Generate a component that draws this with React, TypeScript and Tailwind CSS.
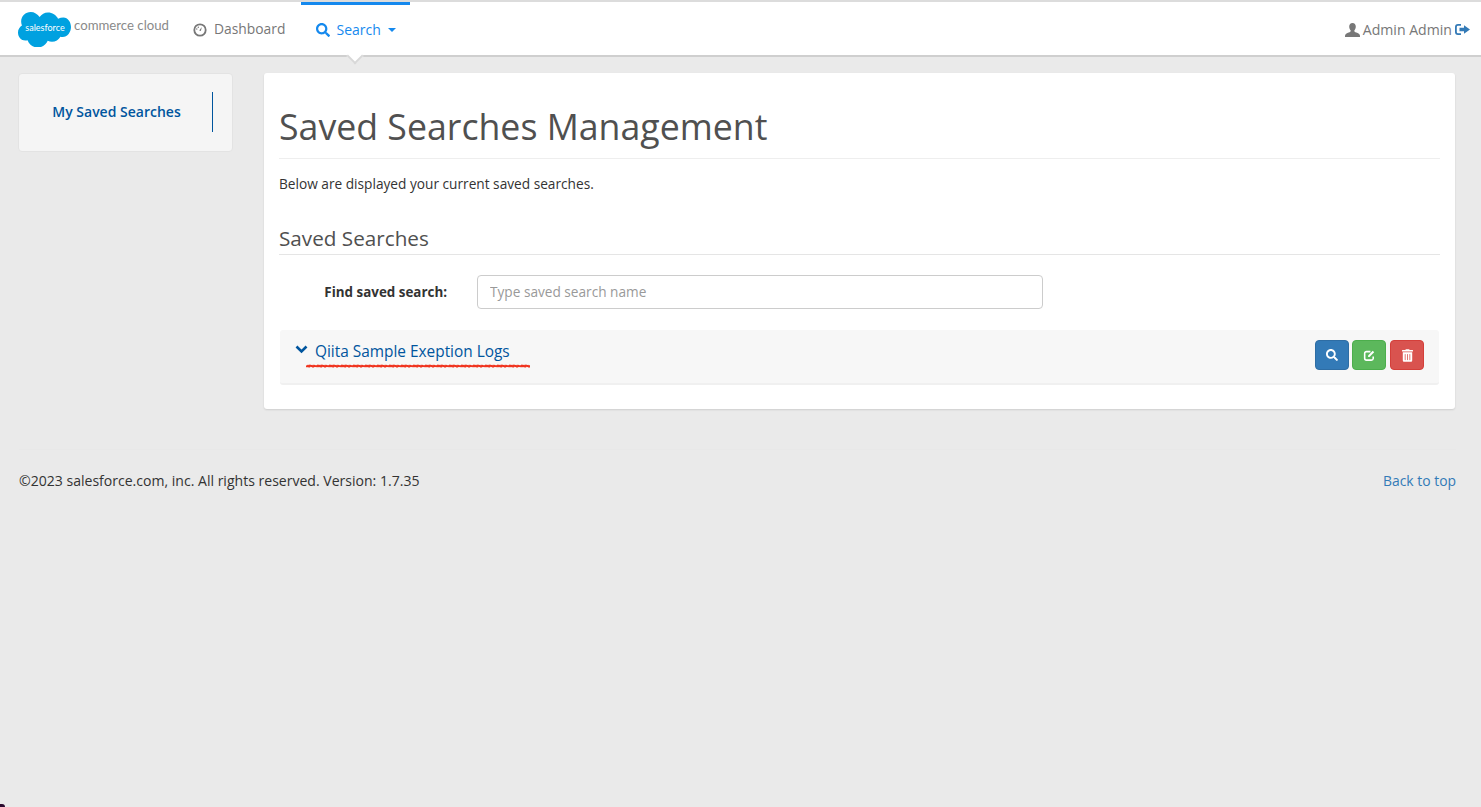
import { FaSearch, FaTrashAlt } from 'react-icons/fa';

const sans = "font-['Open_Sans','Liberation_Sans',sans-serif]";

function Logo() {
  return (
    <div className="relative flex items-center w-[151px] h-[36px]">
      <svg viewBox="0 0 54 36" preserveAspectRatio="none" className="w-[53px] h-[36px] shrink-0">
        <path
          fill="#00a1e0"
          d="M22 6c2-2.600 5-4.500 8.500-4.500 4.500 0 8.300 2.500 10.300 6.200 1.700-.8 3.600-1.200 5.500-1.200C50.800 6.500 54 11 54 16s-3.600 10-8.500 10c-.8 0-1.600-.1-2.300-.2-1.700 3-5 5-8.600 5-1.500 0-3-.4-4.300-1-1.700 4-5.600 6.700-10.200 6.700-4.800 0-8.800-3-10.400-7.200-.7.200-1.500.2-2.300.2C3.300 29.500 0 26 0 21.500c0-3 1.600-5.600 4-7-.5-1.200-.8-2.500-.8-3.900C3.200 5 7.700 1 13 1c3.600 0 6.900 2 9 5z"
        />
      </svg>
      <span className="absolute left-[6px] top-[11px] w-[42px] text-center text-[9px] leading-[12px] text-white font-['Lato',sans-serif]">salesforce</span>
      <span className="ml-[3px] -mt-[6px] text-[13.200px] text-[#8a8a8a] whitespace-nowrap font-['Lato',sans-serif]">commerce cloud</span>
    </div>
  );
}

function Squiggle() {
  // the hand drawn red line under the search name
  const steps = [1.5, 2.4, 1.7, 2.6, 1.4, 2.2, 1.8, 2.7, 1.6, 2.3, 2, 2.5];
  let d = 'M0 2';
  for (let x = 1; x <= 224; x += 1) d += ` L${x} ${steps[x % steps.length]}`;
  return (
    <svg viewBox="0 0 224 4" className="absolute left-[26px] top-[34px] w-[224px] h-[4px]">
      <path d={d} fill="none" stroke="#f0341f" strokeWidth="1.800" />
    </svg>
  );
}

function EditIcon() {
  return (
    <svg viewBox="0 0 14 14" className="w-[13px] h-[13px]" fill="none" stroke="currentColor" strokeWidth="1.700">
      <path d="M11 8v2.200A2 2 0 0 1 9 12H3.800a2 2 0 0 1-2-2V4.800a2 2 0 0 1 2-2H8" />
      <path d="M5.500 8.500V7l5-5 1.500 1.500-5 5z" fill="currentColor" stroke="none" />
    </svg>
  );
}

function DashIcon() {
  return (
    <svg viewBox="0 0 14 14" className="w-[14px] h-[14px]">
      <circle cx="7" cy="7" r="5.700" fill="none" stroke="currentColor" strokeWidth="1.800" />
      <path d="M6.200 7.400 8.800 3.900 7.900 8z" fill="currentColor" />
      <circle cx="3.800" cy="6" r=".7" fill="currentColor" />
      <circle cx="5.300" cy="4.200" r=".7" fill="currentColor" />
    </svg>
  );
}

function UserIcon() {
  return (
    <svg viewBox="0 0 15 14" className="w-[15px] h-[14px]" fill="currentColor">
      <path d="M7.500 0C9.600 0 10.800 1.500 10.800 3.600c0 1.700-.7 3.200-1.500 4 0 .8.300 1.300 1.200 1.700 2 .8 4.500 1.400 4.500 3.400V14H0v-1.300c0-2 2.500-2.600 4.500-3.400.9-.4 1.200-.9 1.200-1.700-.8-.8-1.500-2.300-1.500-4C4.200 1.500 5.400 0 7.500 0z" />
    </svg>
  );
}

function LogoutIcon() {
  return (
    <svg viewBox="0 0 15 13" className="w-[15px] h-[13px] text-[#337ab7]" fill="currentColor">
      <path d="M6 1H3a3 3 0 0 0-3 3v5a3 3 0 0 0 3 3h3v-1.800H3A1.200 1.200 0 0 1 1.800 9V4A1.200 1.200 0 0 1 3 2.800h3z" />
      <path d="M9 2.200 15 6.500 9 10.800V8.300H4.500V4.700H9z" />
    </svg>
  );
}

export default function App() {
  return (
    <div className={`relative min-h-[807px] bg-[#eaeaea] text-[#333] ${sans}`}>
      <div className="relative flex h-[57px] items-stretch justify-between border-t-2 border-b-2 border-t-[#dcdcdc] border-b-[#cfcfcf] bg-white pl-[18px] pr-[11px]">
        <div className="flex items-stretch">
          <div className="flex items-center">
            <Logo />
          </div>
          <a className="ml-[24px] flex items-center gap-[7px] pt-[2px] text-[13.850px] text-[#777]">
            <DashIcon />
            Dashboard
          </a>
          <a className="relative ml-[16px] flex w-[109px] items-center gap-[6px] border-t-[3px] border-[#1589ee] pb-[1px] pl-[15px] text-[14px] text-[#1589ee]">
            <FaSearch className="h-[14px] w-[14px]" />
            Search
            <span className="ml-[1px] h-0 w-0 border-x-[4px] border-t-[4px] border-x-transparent border-t-[#1589ee]" />
            <span className="absolute bottom-[-7px] left-[47.500px] h-[12px] w-[12px] rotate-45 border-r-2 border-b-2 border-[#d8d8d8] bg-white" />
          </a>
        </div>
        <div className="flex items-center gap-[3px] pt-[2px] text-[14.100px] text-[#777]">
          <UserIcon />
          Admin Admin
          <LogoutIcon />
        </div>
      </div>

      <div className="flex items-start gap-[31px] pl-[18px] pr-[26px] pt-[16px]">
        <div className="flex h-[79px] w-[215px] shrink-0 items-center rounded-[4px] border border-[#e3e3e3] bg-[#f5f5f5] pb-[2px] pr-[19px]">
          <div className="flex h-[40px] w-full items-center justify-center border-r border-[#00559e] pl-[2px] text-[14px] font-semibold text-[#00559e]">
            My Saved Searches
          </div>
        </div>

        <div className="flex-1 rounded-[3px] bg-white pb-[24px] pl-[15px] pr-[15px] pt-[28px] shadow-[0_1px_2px_rgba(0,0,0,0.12)]">
          <h1 className="border-b border-[#eeeeee] pb-[7px] text-[35.700px] leading-[50px] text-[#505050]">Saved Searches Management</h1>
          <p className="mt-[15px] text-[13.680px] leading-[19px]">Below are displayed your current saved searches.</p>
          <h2 className="mt-[30px] border-b border-[#e5e5e5] pb-[1px] text-[20.700px] leading-[30px] text-[#505050]">Saved Searches</h2>

          <div className="mt-[20px] flex items-center">
            <label className="w-[168px] text-right text-[13.400px] font-bold">Find saved search:</label>
            <input
              placeholder="Type saved search name"
              className="ml-[30px] h-[34px] w-[566px] rounded-[4px] border border-[#cccccc] px-[12px] pb-[2px] text-[13.650px] placeholder:text-[#999]"
            />
          </div>

          <div className="relative mx-[1px] mt-[21px] flex h-[55px] items-start justify-between rounded-[3px] border-b-2 border-[#f0f0f0] bg-[#f7f7f7] pl-[15px] pr-[15px]">
            <div className="flex items-center gap-[7px] pt-[11px] text-[15.400px] leading-[22px] text-[#00559e]">
              <svg viewBox="0 0 13 9" className="mt-[-6px] h-[9px] w-[13px]" fill="none" stroke="currentColor" strokeWidth="2.600">
                <path d="M1.500 1.500 6.500 6.500 11.500 1.500" />
              </svg>
              Qiita Sample Exeption Logs
            </div>
            <Squiggle />
            <div className="mt-[10px] flex text-white">
              <button className="flex h-[30px] w-[34px] items-center justify-center rounded-[4px] border border-[#2e6da4] bg-[#337ab7]">
                <FaSearch className="h-[12px] w-[12px]" />
              </button>
              <button className="ml-[3px] flex h-[30px] w-[34px] items-center justify-center rounded-[4px] border border-[#4cae4c] bg-[#5cb85c]">
                <EditIcon />
              </button>
              <button className="ml-[4px] flex h-[30px] w-[34px] items-center justify-center rounded-[4px] border border-[#d43f3a] bg-[#d9534f]">
                <FaTrashAlt className="h-[13px] w-[11px]" />
              </button>
            </div>
          </div>
        </div>
      </div>

      <div className="ml-[19px] mr-[25px] mt-[40px] flex justify-between border-t border-[#e8e8e8] pt-[21px] leading-[19px]">
        <span className="text-[14.050px]">©2023 salesforce.com, inc. All rights reserved. Version: 1.7.35</span>
        <a className="text-[13.900px] text-[#337ab7]">Back to top</a>
      </div>

      <span className="absolute bottom-0 left-0 h-[3px] w-[5px] rounded-tr-[5px] bg-[#2a0a2e]" />
    </div>
  );
}
